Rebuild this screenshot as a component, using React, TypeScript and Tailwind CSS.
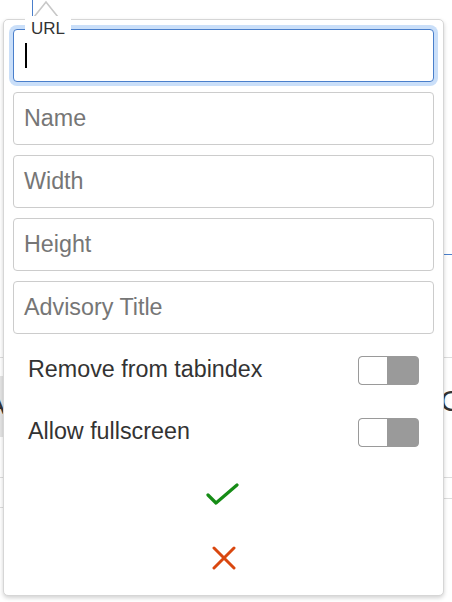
import React from "react";

const font = "font-['Liberation_Sans',Arial,Helvetica,sans-serif]";

function Field({ placeholder }: { placeholder: string }) {
  return (
    <div className="h-[53px] w-full rounded-[4px] border border-[#cccccc] bg-white flex items-center pl-[10px]">
      <span className="text-[23.3px] leading-none text-[#767676]">{placeholder}</span>
    </div>
  );
}

function Toggle() {
  return (
    <div className="w-[61px] h-[29px] rounded-[4px] border border-[#9a9a9a] bg-[#9a9a9a] overflow-hidden flex">
      <div className="w-[28px] h-full bg-white rounded-l-[3px]" />
    </div>
  );
}

function ToggleRow({ label }: { label: string }) {
  return (
    <div className="h-[62px] flex items-center justify-between pl-[15px] pr-[15px]">
      <span className="text-[23.3px] leading-none text-[#333333]">{label}</span>
      <Toggle />
    </div>
  );
}

export default function App() {
  return (
    <div className={`relative w-[452px] h-[602px] bg-white overflow-hidden ${font}`}>
      {/* background page fragments */}
      <div className="absolute left-[32px] top-0 w-px h-[17px] bg-[#4a7fcb]" />
      <div className="absolute left-0 top-[357px] w-full h-px bg-[#dddddd]" />
      <div className="absolute left-0 top-[477px] w-full h-px bg-[#dddddd]" />
      <div className="absolute left-0 top-[507px] w-[10px] h-px bg-[#dddddd]" />
      <div className="absolute right-0 top-[498px] w-[10px] h-px bg-[#dddddd]" />
      <div className="absolute right-0 top-[254px] w-[10px] h-px bg-[#4a7fcb]" />
      <div className="absolute left-0 top-[376px] w-[4px] h-[61px] bg-[#e4e4e4]" />
      <div className="absolute left-[-12px] top-[392px] text-[26px] leading-none text-[#333]">A</div>
      <div className="absolute left-[-10px] top-[540px] text-[24px] leading-none text-[#333]">(</div>
      <div className="absolute left-[440px] top-[386px] text-[30px] leading-none text-[#333]">C</div>

      {/* popup */}
      <div className="absolute left-[3px] top-[19px] w-[441px] h-[577px] rounded-[5px] border border-[#d6d6d6] bg-white shadow-[0_2px_4px_rgba(0,0,0,0.18)]">
        <div className="flex flex-col pt-[9px] px-[9px]">
          <div className="flex flex-col gap-[10px]">
            <div className="relative h-[53px] w-full rounded-[4px] border border-[#4a7fcb] bg-white ring-[4px] ring-[#cadff9]">
              <div className="absolute left-[11px] top-[13px] w-[2px] h-[25px] bg-black" />
            </div>
            <Field placeholder="Name" />
            <Field placeholder="Width" />
            <Field placeholder="Height" />
            <Field placeholder="Advisory Title" />
          </div>
          <div className="mt-[5px] flex flex-col">
            <ToggleRow label="Remove from tabindex" />
            <ToggleRow label="Allow fullscreen" />
          </div>
          <div className="flex flex-col items-center">
            <div className="h-[64px] w-full flex items-center justify-center">
              <svg width="34" height="26" viewBox="0 0 34 26" className="ml-[-1px]">
                <polyline points="2,13 10,21 31,3" fill="none" stroke="#168c16" strokeWidth="3.2" strokeLinecap="round" strokeLinejoin="round" />
              </svg>
            </div>
            <div className="h-[62px] w-full flex items-center justify-center">
              <svg width="24" height="24" viewBox="0 0 24 24" className="ml-[1px]">
                <path d="M2 2 L22 22 M22 2 L2 22" fill="none" stroke="#d9470f" strokeWidth="3" strokeLinecap="round" />
              </svg>
            </div>
          </div>
        </div>
      </div>

      {/* arrow */}
      <svg className="absolute left-[30px] top-0" width="32" height="21" viewBox="0 0 32 21">
        <polygon points="2,20 16,2 30,20" fill="white" stroke="none" />
        <polyline points="2,19.5 16,2 30,19.5" fill="none" stroke="#c8c8c8" strokeWidth="1.6" />
      </svg>

      {/* URL label */}
      <div className="absolute left-[25px] top-[16px] h-[22px] px-[6px] pt-[4px] bg-white text-[17px] leading-[17px] text-[#333333]">
        URL
      </div>
    </div>
  );
}
